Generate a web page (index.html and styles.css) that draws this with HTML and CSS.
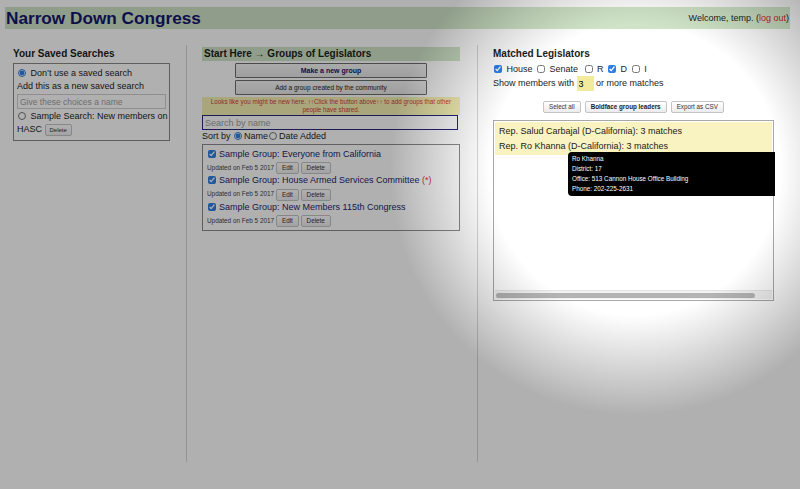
FILE: index.html
```html
<!DOCTYPE html>
<html lang="en">
<head>
<meta charset="utf-8">
<title>Narrow Down Congress</title>
<link rel="stylesheet" href="styles.css">
</head>
<body>
<header class="topbar">
  <h1 class="title">Narrow Down Congress</h1>
  <div class="welcome">Welcome, temp. (<a class="logout" href="#">log out</a>)</div>
</header>
<main class="cols">
  <section class="col col-left">
    <h2 class="heading">Your Saved Searches</h2>
    <div class="saved-box">
      <label class="line"><input class="radio" type="radio" name="saved" checked> Don’t use a saved search</label>
      <div class="line">Add this as a new saved search</div>
      <input class="name-input" type="text" placeholder="Give these choices a name">
      <label class="line"><input class="radio" type="radio" name="saved"> Sample Search: New members on</label>
      <div class="line">HASC <button class="btn">Delete</button></div>
    </div>
  </section>

  <section class="col col-mid">
    <h2 class="heading heading-green">Start Here → Groups of Legislators</h2>
    <div class="actions">
      <button class="big-btn big-btn-bold">Make a new group</button>
      <button class="big-btn">Add a group created by the community</button>
    </div>
    <p class="notice">Looks like you might be new here. ↑↑Click the button above↑↑ to add groups that other people have shared.</p>
    <input class="search" type="text" placeholder="Search by name">
    <div class="sort">Sort by <input class="radio" type="radio" name="sort" checked>Name<input class="radio" type="radio" name="sort">Date Added</div>
    <div class="groups">
      <div class="group">
        <label class="group-name"><input class="check" type="checkbox" checked>Sample Group: Everyone from California</label>
        <div class="meta">Updated on Feb 5 2017 <button class="btn btn-meta">Edit</button> <button class="btn btn-meta">Delete</button></div>
      </div>
      <div class="group">
        <label class="group-name"><input class="check" type="checkbox" checked>Sample Group: House Armed Services Committee <span class="star">(*)</span></label>
        <div class="meta">Updated on Feb 5 2017 <button class="btn btn-meta">Edit</button> <button class="btn btn-meta">Delete</button></div>
      </div>
      <div class="group">
        <label class="group-name"><input class="check" type="checkbox" checked>Sample Group: New Members 115th Congress</label>
        <div class="meta">Updated on Feb 5 2017 <button class="btn btn-meta">Edit</button> <button class="btn btn-meta">Delete</button></div>
      </div>
    </div>
  </section>

  <section class="col col-right">
    <h2 class="heading">Matched Legislators</h2>
    <div class="filters">
      <label><input class="check" type="checkbox" checked> House</label>
      <label><input class="check" type="checkbox"> Senate</label>
      <label class="gap"><input class="check" type="checkbox"> R</label>
      <label><input class="check" type="checkbox" checked> D</label>
      <label><input class="check" type="checkbox"> I</label>
    </div>
    <div class="threshold">Show members with <input class="count" type="text" value="3"> or more matches</div>
    <div class="tools">
      <button class="btn btn-tool">Select all</button>
      <button class="btn btn-tool btn-bold">Boldface group leaders</button>
      <button class="btn btn-tool">Export as CSV</button>
    </div>
    <div class="results">
      <div class="rows">
        <div class="row">Rep. Salud Carbajal (D-California): 3 matches</div>
        <div class="row">Rep. Ro Khanna (D-California): 3 matches</div>
      </div>
      <div class="tooltip">
        <div>Ro Khanna</div>
        <div>District: 17</div>
        <div>Office: 513 Cannon House Office Building</div>
        <div>Phone: 202-225-2631</div>
      </div>
      <div class="hscroll"><div class="thumb"></div></div>
    </div>
  </section>
</main>
<div class="spotlight"></div>
</body>
</html>
```

FILE: styles.css
```css
* { box-sizing: border-box; }
html, body { margin: 0; padding: 0; }
body {
  width: 800px;
  height: 489px;
  overflow: hidden;
  background: #ffffff;
  font-family: "Liberation Sans", Arial, Helvetica, sans-serif;
  font-size: 9px;
  color: #1c1c1c;
  position: relative;
}

.topbar {
  margin: 7px 10px 0 5px;
  height: 22px;
  background: #cfe4c7;
  display: flex;
  align-items: center;
  justify-content: space-between;
  padding: 0 1px 0 1px;
}
.title {
  margin: 0;
  font-size: 17.2px;
  font-weight: bold;
  color: #141470;
}
.welcome { font-size: 9px; color: #222; }
.logout { color: #cc1f1f; text-decoration: none; }

.cols {
  display: flex;
  margin-top: 16px;
  height: 417px;
}
.col { height: 100%; }
.col-left {
  width: 187px;
  padding: 2px 16px 0 13px;
  border-right: 1px solid #d6d6d6;
}
.col-mid {
  width: 291px;
  padding: 2px 17px 0 15px;
  border-right: 1px solid #d6d6d6;
}
.col-right {
  flex: 1;
  padding: 2px 26px 0 15px;
}

.heading {
  margin: 0;
  font-size: 10px;
  font-weight: bold;
  line-height: 14px;
  color: #1c1c1c;
}
.heading-green {
  background: #cfe4c7;
  padding-left: 2px;
}

.radio, .check {
  width: 8px;
  height: 8px;
  margin: 0 2px 0 1px;
  vertical-align: -1px;
  accent-color: #2f7fe0;
}

.btn {
  font-family: inherit;
  font-size: 6px;
  line-height: 8px;
  padding: 1px 4px;
  border: 1px solid #c4c4c4;
  border-radius: 2px;
  background: linear-gradient(#ffffff, #ececec);
  color: #333;
  vertical-align: middle;
}
.btn-bold { font-weight: bold; color: #222; }
.btn-tool { font-size: 6.3px; padding: 1px 5px; }
.btn-meta { font-size: 6.3px; padding: 1px 5px; }

/* left */
.saved-box {
  margin-top: 2px;
  border: 1px solid #888;
  padding: 3px 3px 4px 3px;
  width: 157px;
}
.line { display: block; line-height: 13px; white-space: nowrap; }
.name-input {
  display: block;
  width: 100%;
  height: 15px;
  margin: 1px 0;
  border: 1px solid #cfcfcf;
  font-family: inherit;
  font-size: 8.5px;
  padding: 0 2px;
}
.name-input::placeholder { color: #a0a0a0; }

/* middle */
.actions {
  display: flex;
  flex-direction: column;
  align-items: center;
  gap: 2px;
  margin-top: 2px;
}
.big-btn {
  width: 192px;
  height: 15px;
  font-family: inherit;
  font-size: 6.5px;
  border: 1px solid #6d6d6d;
  border-radius: 1px;
  background: linear-gradient(#f6f6f6, #e6e6e6);
  color: #222;
  padding: 0;
}
.big-btn-bold { font-weight: bold; color: #141470; font-size: 7px; }
.notice {
  margin: 2px 0 0 0;
  background: #f6f1b4;
  color: #d63a3a;
  font-size: 6.3px;
  line-height: 8px;
  text-align: center;
  padding: 1px 8px;
}
.search {
  display: block;
  width: 256px;
  height: 15px;
  border: 1px solid #25257a;
  font-family: inherit;
  font-size: 9px;
  padding: 0 2px;
}
.search::placeholder { color: #9a9a9a; }
.sort { line-height: 13px; margin-top: 0; }
.groups {
  margin-top: 1px;
  border: 1px solid #8a8a8a;
  padding: 3px 4px 3px 4px;
  width: 258px;
}
.group-name {
  display: block;
  line-height: 13px;
  color: #24246a;
  white-space: nowrap;
}
.group-name .check { margin-right: 3px; }
.star { color: #d33; }
.meta { font-size: 6.4px; color: #444; line-height: 13px; }

/* right */
.filters { margin-top: 1px; line-height: 14px; }
.filters label { margin-right: 1px; }
.filters .gap { margin-left: 2px; }
.threshold { line-height: 15px; }
.count {
  width: 17px;
  height: 15px;
  border: none;
  background: #f2eb9d;
  font-family: inherit;
  font-size: 9px;
  padding: 0 2px;
  vertical-align: middle;
}
.tools {
  display: flex;
  justify-content: center;
  gap: 4px;
  margin-top: 10px;
}
.results {
  position: relative;
  margin-top: 7px;
  height: 181px;
  border: 1px solid #a8a8a8;
  padding: 1px;
  display: flex;
  flex-direction: column;
}
.rows { background: #f8f3c0; padding: 2px 4px 1px; flex: none; }
.row { line-height: 15px; white-space: nowrap; }
.tooltip {
  position: absolute;
  left: 74px;
  top: 31px;
  width: 207px;
  height: 44px;
  background: #000;
  color: #fff;
  font-size: 6.3px;
  line-height: 10px;
  padding: 2px 4px;
  border-radius: 4px 0 0 4px;
}
.hscroll {
  margin-top: auto;
  height: 9px;
  background: #f2f2f2;
  border-top: 1px solid #e4e4e4;
  padding: 2px 17px 1px 1px;
}
.thumb { height: 5px; border-radius: 3px; background: #b4b4b4; }

.spotlight {
  position: absolute;
  inset: 0;
  pointer-events: none;
  background: radial-gradient(circle at 635px 170px, rgba(0,0,0,0) 145px, rgba(0,0,0,0.31) 245px);
}
```
